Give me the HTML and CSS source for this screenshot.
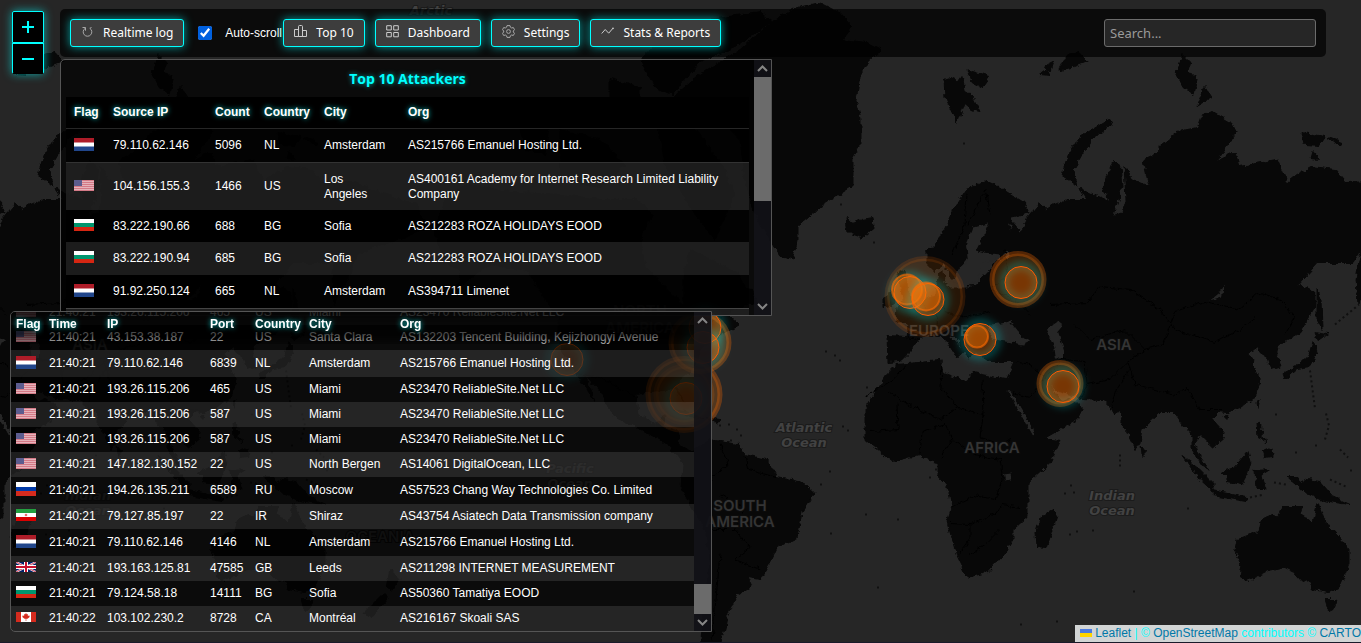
FILE: index.html
```html
<!DOCTYPE html>
<html lang="en">
<head>
<meta charset="utf-8">
<meta name="viewport" content="width=device-width, initial-scale=1">
<title>Attack map</title>
<link rel="stylesheet" href="styles.css">
</head>
<body>
<svg class="defs" width="0" height="0" aria-hidden="true">
  <defs>
    <symbol id="f-nl" viewBox="0 0 20 13" preserveAspectRatio="none"><path fill="#fff" d="M0 0h20v13H0z"/><path fill="#ae1c28" d="M0 0h20v4.500H0z"/><path fill="#21468b" d="M0 8.500h20V13H0z"/></symbol>
    <symbol id="f-us" viewBox="0 0 20 11"><path fill="#e6b3bb" d="M0 0h20v11H0z"/><path stroke="#d47a87" d="M0 .5h20M0 2.500h20M0 4.500h20M0 6.500h20M0 8.500h20M0 10.500h20"/><path fill="#5c5c8e" d="M0 0h8v6H0z"/></symbol>
    <symbol id="f-bg" viewBox="0 0 20 12"><path fill="#fff" d="M0 0h20v12H0z"/><path fill="#00966e" d="M0 4h20v4H0z"/><path fill="#d62612" d="M0 8h20v4H0z"/></symbol>
    <symbol id="f-ru" viewBox="0 0 20 14"><path fill="#fff" d="M0 0h20v14H0z"/><path fill="#0039a6" d="M0 5h20v4H0z"/><path fill="#d52b1e" d="M0 9h20v5H0z"/></symbol>
    <symbol id="f-ir" viewBox="0 0 20 12"><path fill="#fff" d="M0 0h20v12H0z"/><path fill="#239f40" d="M0 0h20v4H0z"/><path fill="#da0000" d="M0 8h20v4H0z"/><circle cx="10" cy="6" r="1.300" fill="#e87070"/></symbol>
    <symbol id="f-gb" viewBox="0 0 20 10"><path fill="#012169" d="M0 0h20v10H0z"/><path stroke="#fff" stroke-width="2" d="M0 0l20 10M20 0L0 10"/><path stroke="#c8102e" stroke-width=".8" d="M0 0l20 10M20 0L0 10"/><path stroke="#fff" stroke-width="4" d="M10 0v10M0 5h20"/><path stroke="#c8102e" stroke-width="2" d="M10 0v10M0 5h20"/></symbol>
    <symbol id="f-ca" viewBox="0 0 20 10"><path fill="#fff" d="M0 0h20v10H0z"/><path fill="#d52b1e" d="M0 0h5v10H0zM15 0h5v10h-5zM10 1l1 1.500 1-.4-.2 1.800 1.700-.6-.3 1 .8.400-2.500 2.100h-1.200V9h-.6V6.800H8.500L6 4.700l.8-.4-.3-1 1.700.6L8 2.100l1 .4z"/></symbol>

    <filter id="rough" x="0" y="0" width="100%" height="100%" color-interpolation-filters="sRGB">
      <feTurbulence type="fractalNoise" baseFrequency=".16" numOctaves="3" seed="4" result="n"/>
      <feDisplacementMap in="SourceGraphic" in2="n" scale="6" xChannelSelector="R" yChannelSelector="G"/>
    </filter>
    <filter id="glow" x="-60%" y="-60%" width="220%" height="220%"><feGaussianBlur stdDeviation="4"/></filter>

    <g id="world">
      <g filter="url(#rough)">
        <g class="land">
          <!-- Europe, Asia and Africa -->
          <path d="M888 363L887 336 907 337 909 326 899 317 912 316 925 301 936 295 938 277 943 270 944 284 950 288 975 286 988 272 1000 257 975 250 960 268 952 280 944 264 934 272 927 265 927 253 940 238 952 213 967 190 986 182 998 187 1024 203 1030 213 1009 218 1021 233 1028 217 1040 203 1046 210 1051 207 1067 200 1086 200 1078 188 1093 195 1109 202 1103 187 1113 162 1120 167 1122 187 1113 217 1122 213 1126 200 1124 167 1132 180 1149 187 1143 160 1159 153 1159 147 1178 132 1197 128 1201 117 1212 112 1231 123 1236 133 1216 162 1235 153 1239 167 1262 163 1277 160 1287 183 1297 175 1312 167 1335 170 1346 183 1375 182 1400 192 1440 205 1452 228 1425 240 1402 246 1380 256 1373 278 1358 304 1356 280 1361 250 1353 263 1318 263 1298 285 1315 293 1315 307 1300 333 1287 340 1278 347 1277 353 1281 367 1272 370 1268 358 1260 353 1258 347 1248 355 1254 360 1253 367 1261 383 1255 397 1240 408 1227 413 1217 412 1213 420 1224 433 1223 439 1213 448 1200 435 1195 443 1200 457 1209 470 1203 467 1192 450 1192 437 1187 427 1183 427 1173 412 1162 412 1142 430 1140 443 1135 450 1122 423 1120 412 1115 413 1103 401 1082 400 1071 395 1058 392 1050 385 1055 394 1062 402 1071 398 1083 410 1078 420 1060 430 1037 443 1032 427 1012 393 1006 390 1015 405 1033 437 1060 441 1050 463 1028 483 1028 517 1013 530 1013 540 1005 553 987 573 967 578 957 557 947 522 952 507 948 488 938 477 938 463 932 462 920 455 892 462 873 447 865 440 865 410 885 377 897 365 940 361 943 373 967 382 973 373 1007 380 1015 362 990 362 977 353 968 360 960 343 947 328 950 338 965 351 957 358 948 344 938 333 920 338 910 352 900 362Z"/>
          <!-- Atlantic and Arctic islands -->
          <path d="M775 20L798 8 819 3 839 13 852 27 842 40 867 43 881 50 867 63 860 77 856 100 861 120 861 143 852 160 852 187 823 205 798 227 798 240 792 260 780 257 772 243 755 215 745 180 740 140 720 120 690 105 670 100 700 75 740 50Z"/>
          <path d="M846 218L853 224 862 220 873 218 874 228 862 238 848 233ZM897 322L917 318 915 303 908 292 905 270 897 272 900 285 903 300 898 308ZM884 308L884 297 893 291 895 304Z"/>
          <path d="M944 80L950 78 958 82 962 76 965 90 974 100 980 112 971 110 964 104 957 124 952 112 945 97Z"/>
          <path d="M967 70L990 77 982 88 971 82ZM1109 120L1112 124 1091 141 1081 158 1074 170 1077 186 1062 176 1068 156 1079 138ZM1183 55L1191 63 1189 70 1197 80 1193 95 1183 88 1176 74ZM1205 87L1212 98 1197 107ZM1302 133L1325 137 1319 146 1305 145ZM1328 138L1342 143 1338 146ZM1313 152L1320 160 1311 159ZM1045 66L1053 62 1050 72ZM1060 70L1067 55 1079 52 1088 62 1072 68ZM1040 75L1047 70 1050 76Z"/>
          <!-- Islands of the Indian and Pacific Oceans -->
          <path d="M1053 509L1057 517 1047 548 1037 547 1036 533 1040 519ZM1141 446L1146 453 1142 457ZM1183 457L1200 470 1213 483 1213 492 1200 480ZM1213 491L1247 498 1246 502 1213 496ZM1223 472L1234 468 1248 452 1251 462 1247 476 1242 485 1228 482ZM1255 471L1270 470 1262 475 1265 489 1257 489ZM1257 423L1262 426 1261 438 1266 442 1258 438ZM1263 452L1272 448 1273 457 1265 458ZM1287 477L1297 477 1300 484 1307 480 1320 482 1333 497 1350 505 1335 503 1320 500 1307 494 1299 487ZM1313 342L1317 353 1310 367 1297 369 1285 380 1283 374 1300 365 1309 356ZM1315 332L1328 334 1318 341ZM1317 288L1321 300 1322 330 1317 320ZM1257 403L1260 400 1258 409ZM1224 417L1228 415 1227 420Z"/>
          <path d="M1237 540L1258 532 1260 523 1268 515 1276 517 1283 507 1302 507 1300 515 1313 523 1318 503 1323 517 1330 528 1343 542 1349 550 1349 565 1340 587 1328 593 1313 590 1308 580 1302 582 1293 572 1285 568 1267 572 1257 577 1247 581 1240 577 1242 567 1235 550ZM1325 600L1336 600 1333 610 1329 612ZM1414 570L1424 580 1416 592 1410 588ZM1408 594L1412 598 1396 618 1388 614Z"/>
          <!-- The Americas -->
          <path d="M434 232L445 198 468 184 511 193 560 195 600 200 640 200 652 215 640 240 645 267 668 290 684 306 684 278 690 250 715 262 738 275 753 301 727 314 740 325 722 335 702 349 694 368 675 385 684 403 676 390 650 392 636 395 638 415 655 425 665 414 664 428 680 432 678 446 693 452 710 440 738 445 745 455 767 460 777 478 803 483 814 493 802 513 797 538 777 548 770 563 760 580 748 578 752 587 737 595 727 617 725 630 717 650 700 650 705 600 710 560 705 530 690 505 681 488 683 465 670 447 642 430 613 417 600 392 585 375 595 402 576 374 559 345 559 319 545 300 528 271 490 265 455 290 462 272 445 262Z"/>
          <path d="M640 60L680 25 760 12 772 22 735 48 700 62 672 95 655 88ZM655 110L690 122 722 165 735 195 715 240 695 215 665 165ZM560 130L600 140 625 165 600 188 560 180ZM520 130L550 120 545 155 525 150ZM610 80L640 88 640 105 610 100ZM740 288L752 290 758 305 746 303ZM673 410L690 413 702 419 690 418ZM706 418L720 420 716 425Z"/>
        </g>
        <g class="water">
          <path d="M990 325L1000 324 1010 322 1020 335 1030 342 1024 345 1005 342 994 340 988 333ZM1046 330L1058 322 1063 326 1058 332 1064 350 1064 360 1056 360 1054 346ZM960 268L968 262 966 245 973 228 988 224 982 240 976 252 1000 255 1000 260 982 264 978 280 966 289 950 289 948 282 958 283Z"/>
          <path d="M1008 224L1013 226 1010 231ZM1003 255L1008 253 1009 259ZM1210 301L1220 293 1225 283 1222 297ZM1004 475L1011 474 1010 480 1005 481Z"/>
        </g>
        <path class="border" d="M888 393L906 404 940 420 958 408 983 416 982 380M942 361L941 388 958 408M906 366L893 380 865 398M897 404L898 430 870 432M920 455L922 432 945 425 952 440 940 460M983 416L980 438 1000 445 1012 440M952 440L975 455 1000 460 1003 480 995 500 975 496 952 507M957 557L970 540 970 525 950 524M970 525L995 515 1003 505 1020 508M970 555L985 545 1000 530M1013 393L1030 398 1045 378 1030 365 1015 362M1045 378L1062 360 1085 362 1087 385 1080 400M1087 385L1110 380 1128 362 1145 350 1163 345 1175 312 1205 302 1240 310 1258 293 1280 300 1295 318 1285 335M1050 305L1087 303 1100 287 1130 290 1160 310 1175 330 1215 343 1240 330 1255 318M1128 362L1135 385 1175 395 1187 388 1200 410 1222 410M1145 350L1125 330 1090 340 1075 325M1110 412L1118 388 1130 370M952 255L965 225 967 195M968 225L985 190M985 190L990 215M1005 250L1008 275 990 290 1015 300 1030 315M940 297L945 312 965 318 990 312M907 337L920 340M923 305L938 318 936 330M720 445L728 465 712 478 705 500M745 456L748 470 777 478M705 530L735 530 750 548 735 560 760 570M735 530L745 510 720 495M720 555L716 600 712 640M559 319L640 319 665 330 700 325 722 318M511 193L511 262M576 374L600 378 636 398"/>
      </g>
      <path class="dots" d="M873 243h2M840 205h2M963 144h2M1062 71h2M890 362h2M825 352h2M834 356h2M839 361h2M866 388h2M842 427h3M847 431h2M865 515h2M829 472h2M820 485h2M830 534h2M877 588h2M897 520h2M935 470h2M929 478h2M1070 486h2M1064 494h2M1120 455v14M1073 493h2M1069 535h2M1076 532h2M1092 531h2M1133 592h2M1187 509h2M1020 625h2M1056 622h2M1310 371l5 38M1326 414l3 12-4 14M1275 415h2M1295 453h2M1315 446h2M1340 450l8 8M1350 471h2M1274 483l12 2M1330 480l18 8M1250 498l14-3M1335 325l24-20M719 426h3M728 425h3M736 430h2M740 436h2M730 441h4"/>
      <g class="sea-name"><text x="431" y="15">Arctic</text><text x="431" y="31">Ocean</text><text x="804" y="432">Atlantic</text><text x="804" y="447">Ocean</text><text x="1112" y="500">Indian</text><text x="1112" y="515">Ocean</text><text x="570" y="473">Pacific</text><text x="570" y="488">Ocean</text></g>
      <g class="land-name"><text x="939" y="336">EUROPE</text><text x="1114" y="350">ASIA</text><text x="992" y="453">AFRICA</text><text x="740" y="511">SOUTH</text><text x="740" y="527">AMERICA</text><text x="640" y="316">NORTH</text><text x="640" y="333">AMERICA</text><text x="1404" y="542">OCEANIA</text></g>
    </g>
    <g id="hit"><circle class="halo" r="17" filter="url(#glow)"/><circle class="core" r="16"/></g>
  </defs>
</svg>

<main class="map">
  <svg class="world" viewBox="0 0 1361 643" preserveAspectRatio="xMidYMid slice" role="img" aria-label="World map of attacks">
    <use href="#world" x="-1024"/>
    <use href="#world"/>
    <g class="pulses">
      <circle cx="1018" cy="280" r="26" class="ring strong"/>
      <circle cx="1060" cy="384" r="21" class="ring strong"/>
      <circle cx="925" cy="297" r="38" class="ring"/>
      <circle cx="700" cy="343" r="29" class="ring strong"/>
      <circle cx="684" cy="395" r="36" class="ring strong"/>
      <circle cx="684" cy="395" r="28" class="ring"/>
    </g>
    <use href="#hit" x="1021" y="283"/>
    <use href="#hit" x="1063" y="387"/>
    <use href="#hit" x="910" y="293"/>
    <circle class="disc" cx="907" cy="290" r="15"/>
    <use href="#hit" x="928" y="300"/>
    <circle class="disc" cx="926" cy="297" r="14"/>
    <use href="#hit" x="980" y="340"/>
    <circle class="disc" cx="977" cy="337" r="11"/>
    <use href="#hit" x="567" y="360"/>
    <use href="#hit" x="705" y="328"/>
    <use href="#hit" x="703" y="348"/>
    <use href="#hit" x="686" y="399"/>
  </svg>

  <div class="zoom">
    <button type="button" aria-label="Zoom in"><svg width="14" height="14" viewBox="0 0 14 14"><path d="M7 1v12M1 7h12"/></svg></button>
    <button type="button" aria-label="Zoom out"><svg width="14" height="14" viewBox="0 0 14 14"><path d="M1 7h12"/></svg></button>
  </div>

  <header class="toolbar">
    <button type="button" class="btn"><svg class="icon" viewBox="0 0 13 13"><path d="M4.200 3.300A4.300 4.300 0 1 0 8.800 3.300M1.500 2.500h3v3.200M8.800 3.300L10.500 2.500"/></svg>Realtime log</button>
    <label class="auto"><input type="checkbox" checked><span>Auto-scroll</span></label>
    <button type="button" class="btn"><svg class="icon bright" viewBox="0 0 13 13"><path d="M.5 4.500h4v7h-4zM4.500 1.500c0-.6.400-1 1-1h2c.6 0 1 .4 1 1v10h-4zM8.500 5.500h4v6h-4z"/></svg>Top 10</button>
    <button type="button" class="btn"><svg class="icon bright" viewBox="0 0 13 13"><path d="M.7.7h4.600v4.300H.7zM7.700.7h4.600v4.300H7.700zM.7 7.500h4.600v4.300H.7zM7.700 7.500h4.600v4.300H7.700z"/></svg>Dashboard</button>
    <button type="button" class="btn"><svg class="icon" viewBox="0 0 13 13"><path d="M5 .6h3l.4 1.600 1.300.8 1.600-.5 1.200 2.200L11.300 6v1l1.200 1.300-1.200 2.200-1.600-.5-1.300.8L8 12.400H5l-.4-1.600-1.300-.8-1.600.5L.5 8.300 1.700 7V6L.5 4.700l1.200-2.200 1.600.5 1.300-.8z"/><circle cx="6.500" cy="6.500" r="1.900"/></svg>Settings</button>
    <button type="button" class="btn"><svg class="icon bright" viewBox="0 0 13 13"><path d="M.7 8.500l3.500-4 3.500 3.700 4.300-5"/><circle cx="12" cy="3.300" r=".5"/></svg>Stats &amp; Reports</button>
    <input class="search" type="text" placeholder="Search..." aria-label="Search">
  </header>

  <section class="panel top">
    <div class="scroll">
      <h2>Top 10 Attackers</h2>
      <table>
        <colgroup><col class="t1"><col class="t2"><col class="t3"><col class="t4"><col class="t5"><col></colgroup>
        <thead><tr><th>Flag</th><th>Source IP</th><th>Count</th><th>Country</th><th>City</th><th>Org</th></tr></thead>
        <tbody>
          <tr><td><svg class="flag nl"><use href="#f-nl"/></svg></td><td>79.110.62.146</td><td>5096</td><td>NL</td><td>Amsterdam</td><td>AS215766 Emanuel Hosting Ltd.</td></tr>
          <tr class="two"><td><svg class="flag us"><use href="#f-us"/></svg></td><td>104.156.155.3</td><td>1466</td><td>US</td><td>Los Angeles</td><td>AS400161 Academy for Internet Research Limited Liability Company</td></tr>
          <tr class="low"><td><svg class="flag bg"><use href="#f-bg"/></svg></td><td>83.222.190.66</td><td>688</td><td>BG</td><td>Sofia</td><td>AS212283 ROZA HOLIDAYS EOOD</td></tr>
          <tr><td><svg class="flag bg"><use href="#f-bg"/></svg></td><td>83.222.190.94</td><td>685</td><td>BG</td><td>Sofia</td><td>AS212283 ROZA HOLIDAYS EOOD</td></tr>
          <tr><td><svg class="flag nl"><use href="#f-nl"/></svg></td><td>91.92.250.124</td><td>665</td><td>NL</td><td>Amsterdam</td><td>AS394711 Limenet</td></tr>
          <tr><td></td><td></td><td></td><td></td><td></td><td></td></tr>
        </tbody>
      </table>
    </div>
    <div class="bar" aria-hidden="true"><svg viewBox="0 0 17 17"><path d="M4 11l4.500-4.500L13 11"/></svg><div class="track"><i class="thumb"></i></div><svg viewBox="0 0 17 17"><path d="M4 6l4.500 4.500L13 6"/></svg></div>
  </section>

  <section class="panel log" aria-label="Realtime log">
    <div class="scroll">
      <table>
        <colgroup><col class="l1"><col class="l2"><col class="l3"><col class="l4"><col class="l5"><col class="l6"><col></colgroup>
        <thead><tr><th>Flag</th><th>Time</th><th>IP</th><th>Port</th><th>Country</th><th>City</th><th>Org</th></tr></thead>
        <tbody>
          <tr><td><svg class="flag us"><use href="#f-us"/></svg></td><td>21:40:21</td><td>193.26.115.206</td><td>465</td><td>US</td><td>Miami</td><td>AS23470 ReliableSite.Net LLC</td></tr>
          <tr><td><svg class="flag us"><use href="#f-us"/></svg></td><td>21:40:21</td><td>193.26.115.206</td><td>465</td><td>US</td><td>Miami</td><td>AS23470 ReliableSite.Net LLC</td></tr>
          <tr><td><svg class="flag us"><use href="#f-us"/></svg></td><td>21:40:21</td><td>43.153.38.187</td><td>22</td><td>US</td><td>Santa Clara</td><td>AS132203 Tencent Building, Kejizhongyi Avenue</td></tr>
          <tr class="tall"><td><svg class="flag nl"><use href="#f-nl"/></svg></td><td>21:40:21</td><td>79.110.62.146</td><td>6839</td><td>NL</td><td>Amsterdam</td><td>AS215766 Emanuel Hosting Ltd.</td></tr>
          <tr><td><svg class="flag us"><use href="#f-us"/></svg></td><td>21:40:21</td><td>193.26.115.206</td><td>465</td><td>US</td><td>Miami</td><td>AS23470 ReliableSite.Net LLC</td></tr>
          <tr><td><svg class="flag us"><use href="#f-us"/></svg></td><td>21:40:21</td><td>193.26.115.206</td><td>587</td><td>US</td><td>Miami</td><td>AS23470 ReliableSite.Net LLC</td></tr>
          <tr><td><svg class="flag us"><use href="#f-us"/></svg></td><td>21:40:21</td><td>193.26.115.206</td><td>587</td><td>US</td><td>Miami</td><td>AS23470 ReliableSite.Net LLC</td></tr>
          <tr><td><svg class="flag us"><use href="#f-us"/></svg></td><td>21:40:21</td><td>147.182.130.152</td><td>22</td><td>US</td><td>North Bergen</td><td>AS14061 DigitalOcean, LLC</td></tr>
          <tr class="tall"><td><svg class="flag ru"><use href="#f-ru"/></svg></td><td>21:40:21</td><td>194.26.135.211</td><td>6589</td><td>RU</td><td>Moscow</td><td>AS57523 Chang Way Technologies Co. Limited</td></tr>
          <tr><td><svg class="flag bg"><use href="#f-ir"/></svg></td><td>21:40:21</td><td>79.127.85.197</td><td>22</td><td>IR</td><td>Shiraz</td><td>AS43754 Asiatech Data Transmission company</td></tr>
          <tr class="tall"><td><svg class="flag nl"><use href="#f-nl"/></svg></td><td>21:40:21</td><td>79.110.62.146</td><td>4146</td><td>NL</td><td>Amsterdam</td><td>AS215766 Emanuel Hosting Ltd.</td></tr>
          <tr><td><svg class="flag gb"><use href="#f-gb"/></svg></td><td>21:40:21</td><td>193.163.125.81</td><td>47585</td><td>GB</td><td>Leeds</td><td>AS211298 INTERNET MEASUREMENT</td></tr>
          <tr><td><svg class="flag bg"><use href="#f-bg"/></svg></td><td>21:40:21</td><td>79.124.58.18</td><td>14111</td><td>BG</td><td>Sofia</td><td>AS50360 Tamatiya EOOD</td></tr>
          <tr><td><svg class="flag gb"><use href="#f-ca"/></svg></td><td>21:40:22</td><td>103.102.230.2</td><td>8728</td><td>CA</td><td>Montréal</td><td>AS216167 Skoali SAS</td></tr>
        </tbody>
      </table>
    </div>
    <div class="bar" aria-hidden="true"><svg viewBox="0 0 17 17"><path d="M4 11l4.500-4.500L13 11"/></svg><div class="track end"><i class="thumb"></i></div><svg viewBox="0 0 17 17"><path d="M4 6l4.500 4.500L13 6"/></svg></div>
  </section>

  <footer class="credit"><svg width="12" height="8" viewBox="0 0 12 8" aria-hidden="true"><path fill="#4c7be1" d="M0 0h12v4H0z"/><path fill="#ffd500" d="M0 4h12v4H0z"/></svg> <a href="#leaflet">Leaflet</a> | © <a href="#osm">OpenStreetMap</a> contributors © <a href="#carto">CARTO</a></footer>
</main>
</body>
</html>
```
FILE: styles.css
```css
* { box-sizing: border-box; }
html, body { height: 100%; margin: 0; }
body {
  background: #1a1a2a;
  color: #fff;
  font: 12px/15px "Liberation Sans", Arial, sans-serif;
  overflow: hidden;
}
.defs { position: absolute; }
.map {
  position: relative;
  height: calc(100% - 1px);
  background: #262626;
  overflow: hidden;
}
.world { display: block; width: 100%; height: 100%; }
.land { fill: #080808; stroke: #080808; stroke-width: 1; }
.water { fill: #262626; }
.border { fill: none; stroke: #000; stroke-width: 1; }
.dots { fill: none; stroke: #101010; stroke-width: 2; stroke-dasharray: 2 3; }
.sea-name, .land-name {
  fill: #424242;
  stroke: #1b1b1b;
  stroke-width: 2px;
  paint-order: stroke;
  text-anchor: middle;
  font: italic 700 13px "DejaVu Sans", sans-serif;
}
.land-name { font: 600 15px Inter, sans-serif; fill: #343434; stroke: #0b0b0b; }

.ring { fill: #ff7800; fill-opacity: .12; stroke: #ff6a00; stroke-opacity: .14; stroke-width: 5; }
.ring.strong { fill-opacity: .2; stroke-opacity: .3; }
.halo { fill: none; stroke: #00ffff; stroke-width: 5; stroke-opacity: .4; }
.core { fill: #ff6a00; fill-opacity: .32; stroke: #ff5a00; stroke-width: 1; }
.disc { fill: #ff7800; fill-opacity: .42; stroke: #ff6a00; stroke-opacity: .6; stroke-width: 2; }

.zoom {
  position: absolute;
  top: 11px;
  left: 12px;
  display: flex;
  flex-direction: column;
  width: 32px;
  border-radius: 2px;
  box-shadow: 0 0 10px rgba(0, 255, 255, .6);
}
.zoom button {
  display: grid;
  place-items: center;
  height: 32px;
  padding: 0;
  border: 1px solid #00ffff;
  border-radius: 2px 2px 0 0;
  background: #000;
}
.zoom button + button { height: 31px; border-bottom-color: #000; border-radius: 0 0 2px 2px; }
.zoom path { stroke: #00ffff; stroke-width: 2; }

.toolbar {
  position: absolute;
  top: 9px;
  left: 60px;
  right: 35px;
  display: flex;
  align-items: center;
  gap: 10px;
  padding: 10px;
  border-radius: 5px;
  background: rgba(0, 0, 0, .7);
}
.btn {
  display: flex;
  align-items: center;
  gap: 9px;
  height: 28px;
  padding: 0 10px;
  border: 1px solid #00ffff;
  border-radius: 3px;
  background: #3d3d3d;
  box-shadow: 0 0 10px rgba(0, 255, 255, .6);
  color: #fff;
  font: 12px/18px "Noto Sans", sans-serif;
  white-space: nowrap;
}
.icon { width: 13px; height: 13px; margin-bottom: 3px; fill: none; stroke: #a8a8a8; stroke-width: 1; }
.icon.bright { stroke: #ccc; }
.auto { display: flex; align-items: center; gap: 13px; width: 89px; padding-left: 4px; margin-right: -10px; white-space: nowrap; }
.auto input { flex: none; width: 14px; height: 14px; margin: 0; accent-color: #0060df; }
.search {
  width: 212px;
  height: 28px;
  margin-left: auto;
  padding: 0 5px;
  border: 1px solid #6b6b6b;
  border-radius: 3px;
  background: #262626;
  color: #fff;
  font: 13px/18px "Noto Sans", sans-serif;
}
.search::placeholder { color: #9a9a9a; opacity: 1; }

.panel {
  position: absolute;
  display: flex;
  border: 1px solid #555;
  border-radius: 5px 0 0 5px;
  background: rgba(0, 0, 0, .7);
  overflow: hidden;
}
.top { top: 59px; left: 60px; width: 712px; height: 40%; }
.log { left: 10px; bottom: 10px; width: 702px; height: 50%; }
.scroll { flex: 1; min-width: 0; overflow-y: auto; scrollbar-width: none; }
.top .scroll { padding: 0 5px; }
.log .scroll { display: flex; flex-direction: column-reverse; }

h2 {
  margin: 0;
  padding: 10px 0 9px;
  color: #00ffff;
  font: 700 14px/18px "Open Sans", sans-serif;
  text-align: center;
  text-shadow: 0 0 5px rgba(0, 255, 255, .6);
}
table { width: 100%; flex: none; border-collapse: separate; border-spacing: 0; table-layout: fixed; }
th, td { padding: 0 5px; text-align: left; vertical-align: middle; }
th { text-shadow: 0 0 5px rgba(0, 255, 255, .8); }
tbody tr:nth-child(even) { background: rgba(255, 255, 255, .11); }
.flag { display: block; width: 20px; margin-bottom: 3px; }
.nl { height: 13px; }
.us { height: 11px; }
.bg { height: 12px; }
.ru { height: 14px; }
.gb { height: 10px; }

.top table { background: rgba(0, 0, 0, .7); }
.top th, .top td { height: 33px; padding: 0 8px; }
.top td:nth-child(5) { padding-right: 12px; }
.top th { height: 32px; background: #000; border-bottom: 1px solid #262626; }
.top .two td { height: 48px; border-top: 1px solid #333; }
.top .low td { height: 32px; }
.top tr:last-child td { border-top: 1px solid #444; }
.t1 { width: 39px; }
.t2 { width: 102px; }
.t3 { width: 49px; }
.t4 { width: 60px; }
.t5 { width: 84px; }

.log td { height: 25px; }
.log .tall td { height: 27px; }
.log thead th {
  position: sticky;
  top: 0;
  height: 32px;
  padding-bottom: 8px;
  background: linear-gradient(rgba(0, 0, 0, .85), rgba(0, 0, 0, .7) 70%, rgba(0, 0, 0, .3));
}
.l1 { width: 33px; }
.l2 { width: 58px; }
.l3 { width: 103px; }
.l4 { width: 45px; }
.l5 { width: 54px; }
.l6 { width: 91px; }

.bar { display: flex; flex-direction: column; width: 17px; background: rgba(22, 22, 28, .75); }
.bar svg { width: 17px; height: 17px; fill: none; stroke: #858585; stroke-width: 2; }
.track { display: flex; flex: 1; }
.thumb { width: 100%; height: 56%; background: #6b6b6b; }
.end { align-items: flex-end; }
.end .thumb { height: 30px; }

.credit {
  position: absolute;
  right: 0;
  bottom: 0;
  padding: 1px 0 1px 5px;
  background: #d2d5d5;
  color: #00ffff;
  white-space: nowrap;
}
.credit a { color: #0078a8; text-decoration: none; }
```
